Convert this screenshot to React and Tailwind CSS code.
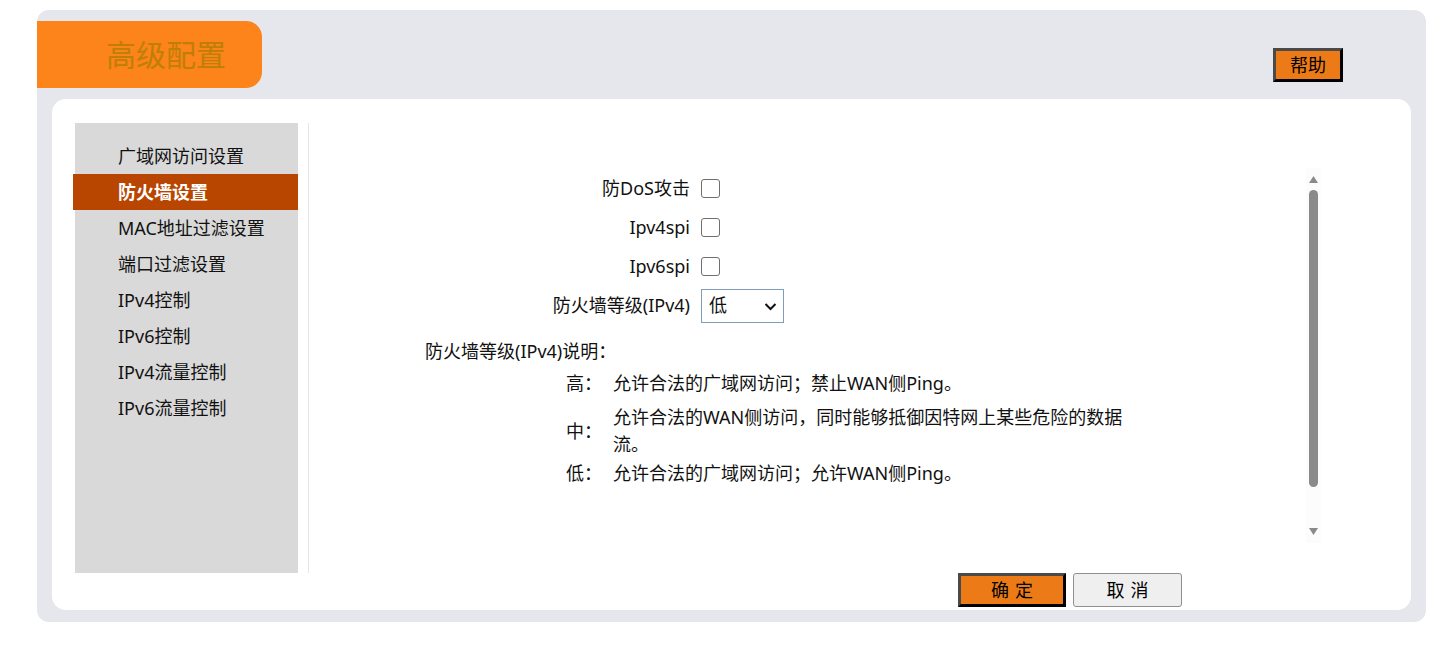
import React, { useState } from "react";

const MENU = [
  "广域网访问设置",
  "防火墙设置",
  "MAC地址过滤设置",
  "端口过滤设置",
  "IPv4控制",
  "IPv6控制",
  "IPv4流量控制",
  "IPv6流量控制",
];

const CHECKS = [
  { key: "dos", label: "防DoS攻击" },
  { key: "v4spi", label: "Ipv4spi" },
  { key: "v6spi", label: "Ipv6spi" },
];

function Checkbox({ checked, onChange }) {
  return (
    <input
      type="checkbox"
      checked={checked}
      onChange={onChange}
      className="appearance-none w-[19px] h-[19px] border-[1.5px] border-[#6f6f6f] rounded-[3px] bg-white checked:bg-[#0075ff] checked:border-[#0075ff]"
    />
  );
}

export default function App() {
  const [active, setActive] = useState(1);
  const [checks, setChecks] = useState({ dos: false, v4spi: false, v6spi: false });
  const [level, setLevel] = useState("low");

  return (
    <div
      className="w-[1449px] h-[648px] bg-white pt-[10px] pl-[37px] text-[18px] text-[#111]"
      style={{ fontFamily: '"Noto Sans", "Noto Sans CJK SC", sans-serif' }}
    >
      <div className="w-[1389px] h-[612px] bg-[#e6e7ec] rounded-[12px] flex flex-col">
        {/* header */}
        <div className="h-[89px] flex justify-between">
          <div className="mt-[11px] w-[225px] h-[67px] bg-[#fc841a] rounded-r-[16px] flex items-center pl-[69px]">
            <span className="text-[30px] leading-none text-[#bf7f06]">高级配置</span>
          </div>
          <button
            type="button"
            className="mt-[38px] mr-[83px] w-[70px] h-[34px] bg-[#ec7a17] border-[3px] border-t-[#4a4a4a] border-l-[#4a4a4a] border-b-black border-r-black text-[18px] leading-none text-black"
          >
            帮助
          </button>
        </div>

        {/* white panel */}
        <div className="ml-[15px] w-[1359px] h-[511px] bg-white rounded-[14px] pt-[24px] pl-[23px]">
          <div className="flex h-[450px]">
            <div className="w-[223px] h-full bg-[#d9d9d9] pt-[15px]">
              {MENU.map((item, i) => (
                <div
                  key={item}
                  onClick={() => setActive(i)}
                  className={
                    i === active
                      ? "h-[36px] -ml-[2px] pl-[45px] flex items-center bg-[#b84500] text-white font-bold cursor-pointer"
                      : "h-[36px] pl-[43px] flex items-center text-[#111] cursor-pointer"
                  }
                >
                  {item}
                </div>
              ))}
            </div>
            <div className="ml-[10px] w-px h-full bg-[#e4e4e4]" />

            <div className="w-[997px] h-full pt-[46px]">
              {CHECKS.map((c) => (
                <div key={c.key} className="h-[39px] flex items-center">
                  <div className="w-[381px] text-right mr-[11px]">{c.label}</div>
                  <Checkbox
                    checked={checks[c.key]}
                    onChange={() => setChecks((prev) => ({ ...prev, [c.key]: !prev[c.key] }))}
                  />
                </div>
              ))}
              <div className="h-[39px] flex items-center">
                <div className="w-[381px] text-right mr-[11px]">防火墙等级(IPv4)</div>
                <div className="relative w-[83px] h-[34px]">
                  <select
                    value={level}
                    onChange={(e) => setLevel(e.target.value)}
                    className="appearance-none w-full h-full border border-[#7f9db9] bg-white pl-[7px] text-[18px] text-[#111] outline-none"
                  >
                    <option value="high">高</option>
                    <option value="mid">中</option>
                    <option value="low">低</option>
                  </select>
                  <svg
                    className="absolute right-[7px] top-[11px] pointer-events-none"
                    width="13"
                    height="13"
                    viewBox="0 0 13 13"
                  >
                    <path d="M1.5 4 L6.5 9 L11.5 4" fill="none" stroke="#111" strokeWidth="2" />
                  </svg>
                </div>
              </div>

              <div className="mt-[13px] ml-[116px] leading-[27px]">防火墙等级(IPv4)说明：</div>
              <div className="ml-[257px] leading-[27px]">
                <div className="mt-[5px] flex items-center">
                  <div className="w-[47px]">高：</div>
                  <div className="w-[522px]">允许合法的广域网访问；禁止WAN侧Ping。</div>
                </div>
                <div className="mt-[7px] flex items-center">
                  <div className="w-[47px]">中：</div>
                  <div className="w-[522px]">允许合法的WAN侧访问，同时能够抵御因特网上某些危险的数据流。</div>
                </div>
                <div className="mt-[2px] flex items-center">
                  <div className="w-[47px]">低：</div>
                  <div className="w-[522px]">允许合法的广域网访问；允许WAN侧Ping。</div>
                </div>
              </div>
            </div>

            {/* scrollbar */}
            <div className="mt-[45px] w-[15px] h-[375px] bg-[#fcfcfc] flex flex-col items-center">
              <svg className="mt-[8px]" width="9" height="7" viewBox="0 0 9 7">
                <path d="M4.5 0 L9 7 L0 7 Z" fill="#8a8a8a" />
              </svg>
              <div className="mt-[7px] w-[9px] h-[297px] bg-[#8a8a8a] rounded-full" />
              <svg className="mt-[41px]" width="9" height="7" viewBox="0 0 9 7">
                <path d="M0 0 L9 0 L4.5 7 Z" fill="#8a8a8a" />
              </svg>
            </div>
          </div>

          <div className="flex gap-[7px] ml-[883px]">
            <button
              type="button"
              className="w-[108px] h-[34px] bg-[#ec7b17] border-[3px] border-t-[#4a4a4a] border-l-[#4a4a4a] border-b-black border-r-black text-[18px] leading-none tracking-[6px] pl-[6px] text-black"
            >
              确定
            </button>
            <button
              type="button"
              className="w-[109px] h-[34px] bg-[#efefef] border border-[#8f8f8f] rounded-[3px] text-[18px] leading-none tracking-[6px] pl-[6px] text-black"
            >
              取消
            </button>
          </div>
        </div>
      </div>
    </div>
  );
}
